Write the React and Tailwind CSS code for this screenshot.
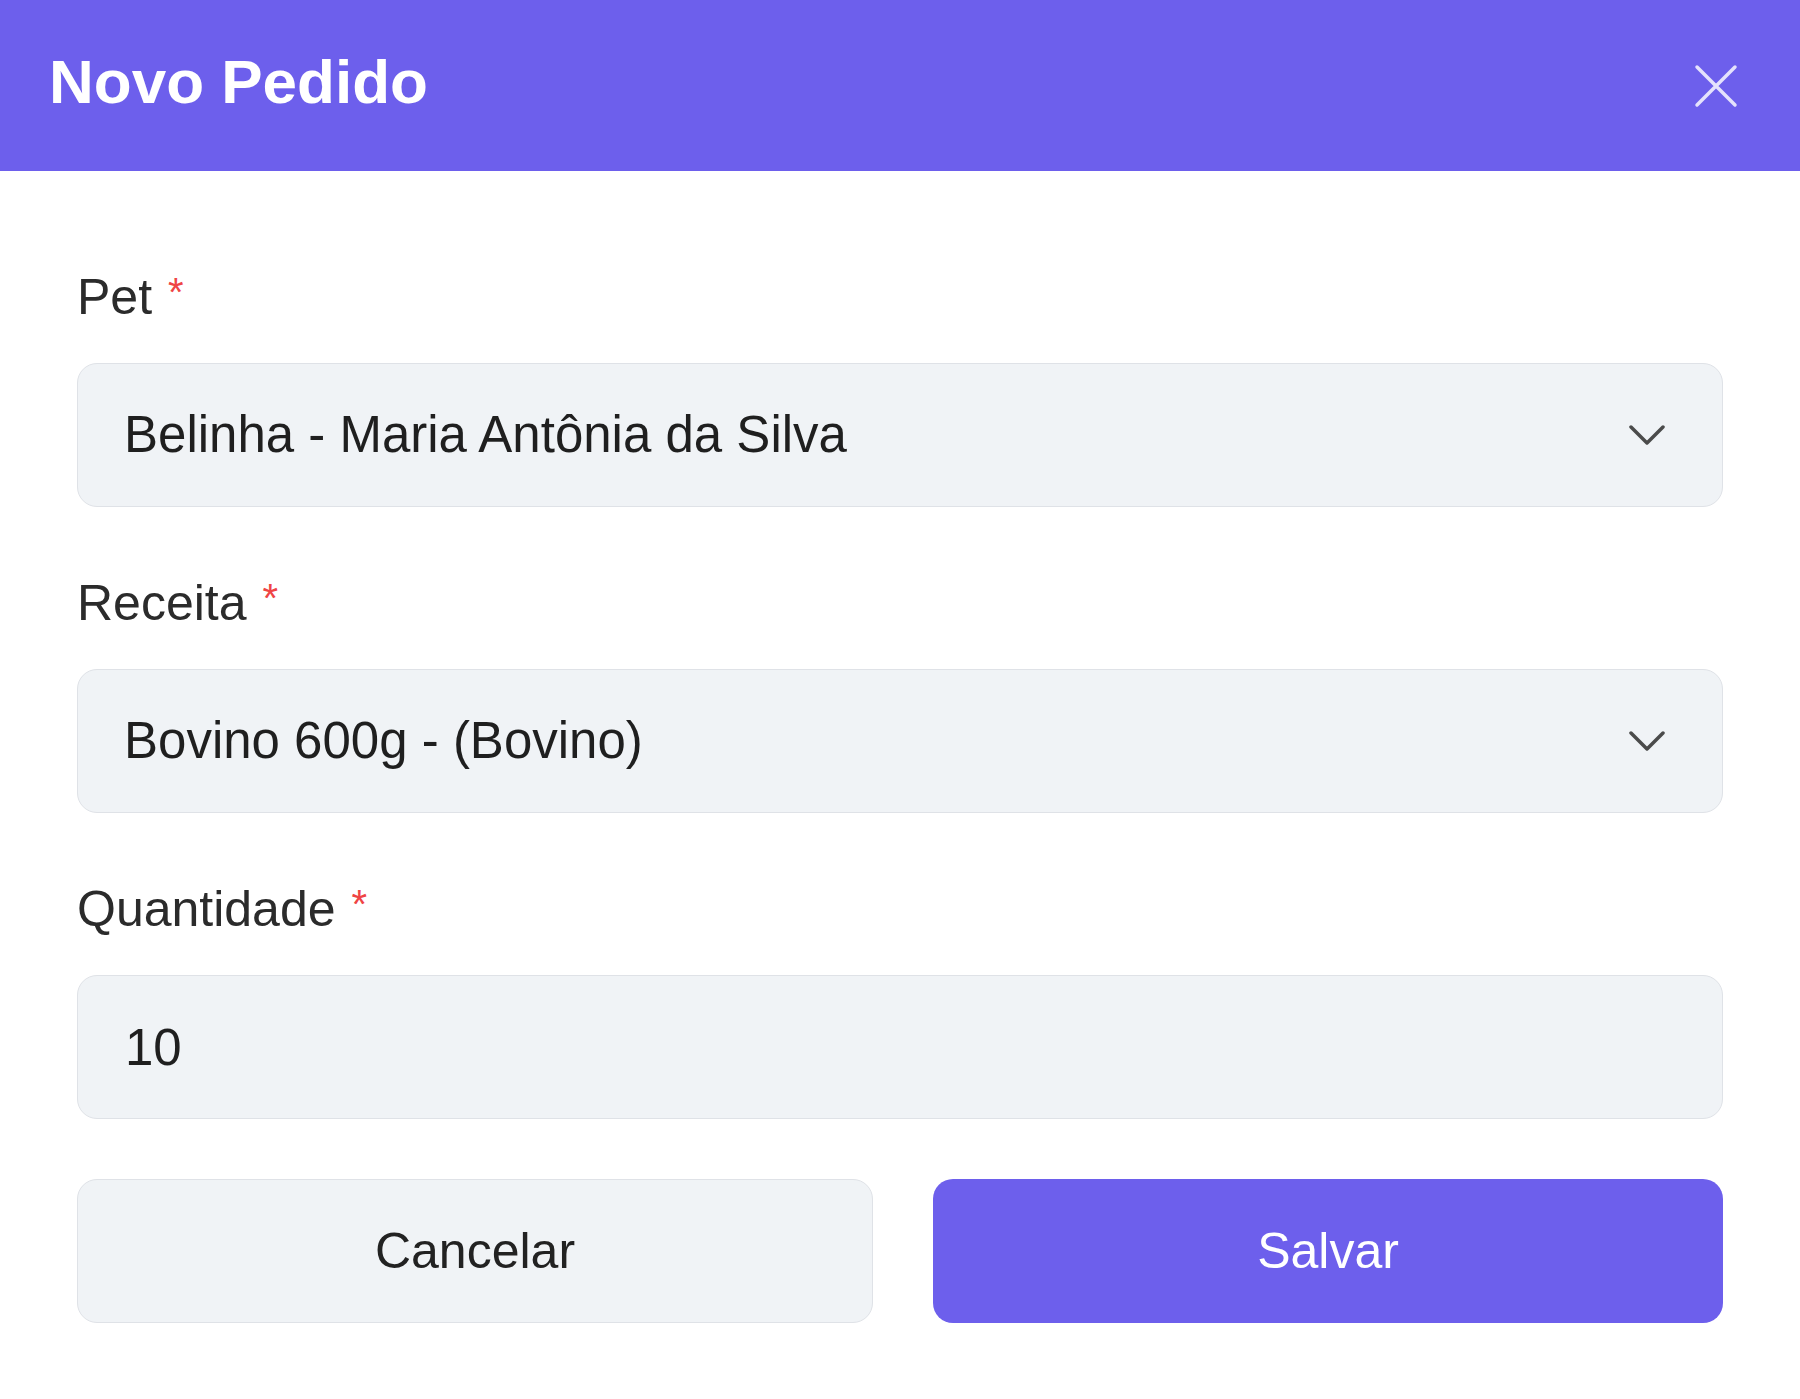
import React, { useState } from 'react';

const pets = ['Belinha - Maria Antônia da Silva'];
const receitas = ['Bovino 600g - (Bovino)'];

function Chevron() {
    return (
        <svg width="36" height="22" viewBox="0 0 36 22" fill="none">
            <path d="M2 3 L18 19 L34 3" stroke="#4b4b4b" strokeWidth="3.5" strokeLinecap="round" strokeLinejoin="round" />
        </svg>
    );
}

function Label({ children }) {
    return (
        <label className="block text-[50px] leading-[60px] text-[#2b2b2b] mb-9">
            {children} <span className="ml-[2px] text-[40px] leading-none align-[8px] text-[#ef4444]">*</span>
        </label>
    );
}

function SelectBox({ value }) {
    return (
        <div className="h-[144px] flex items-center justify-between bg-[#f0f3f6] border border-[#dfe2e7] rounded-[20px] pl-[46px] pr-[57px] cursor-pointer">
            <span className="text-[51px] text-[#1f1f1f]">{value}</span>
            <Chevron />
        </div>
    );
}

export default function App() {
    const [qtd, setQtd] = useState('10');

    return (
        <div className="min-h-screen bg-white font-['Liberation_Sans',Arial,sans-serif]">
            <div className="h-[171px] bg-[#6d5fec] flex items-center justify-between pl-[49px] pr-[62px] pb-[8px]">
                <h1 className="text-[62px] leading-none font-bold text-white">Novo Pedido</h1>
                <button className="mt-[8px]">
                    <svg width="44" height="44" viewBox="0 0 44 44" fill="none">
                        <path d="M3 3 L41 41 M41 3 L3 41" stroke="rgba(255,255,255,0.82)" strokeWidth="3.5" strokeLinecap="round" />
                    </svg>
                </button>
            </div>

            <div className="px-[77px] pt-[96px]">
                <div>
                    <Label>Pet</Label>
                    <SelectBox value={pets[0]} />
                </div>

                <div className="mt-[66px]">
                    <Label>Receita</Label>
                    <SelectBox value={receitas[0]} />
                </div>

                <div className="mt-[66px]">
                    <Label>Quantidade</Label>
                    <input
                        value={qtd}
                        onChange={e => setQtd(e.target.value)}
                        className="w-full h-[144px] bg-[#f0f3f6] border border-[#dfe2e7] rounded-[20px] pl-[47px] text-[51px] text-[#1f1f1f] outline-none"
                    />
                </div>

                <div className="mt-[60px] grid grid-cols-[796px_1fr] gap-[60px]">
                    <button className="h-[144px] bg-[#f0f3f6] border border-[#dfe2e7] rounded-[20px] text-[50px] text-[#222]">
                        Cancelar
                    </button>
                    <button className="h-[144px] bg-[#6d5fec] rounded-[20px] text-[50px] text-white">
                        Salvar
                    </button>
                </div>
            </div>
        </div>
    );
}
